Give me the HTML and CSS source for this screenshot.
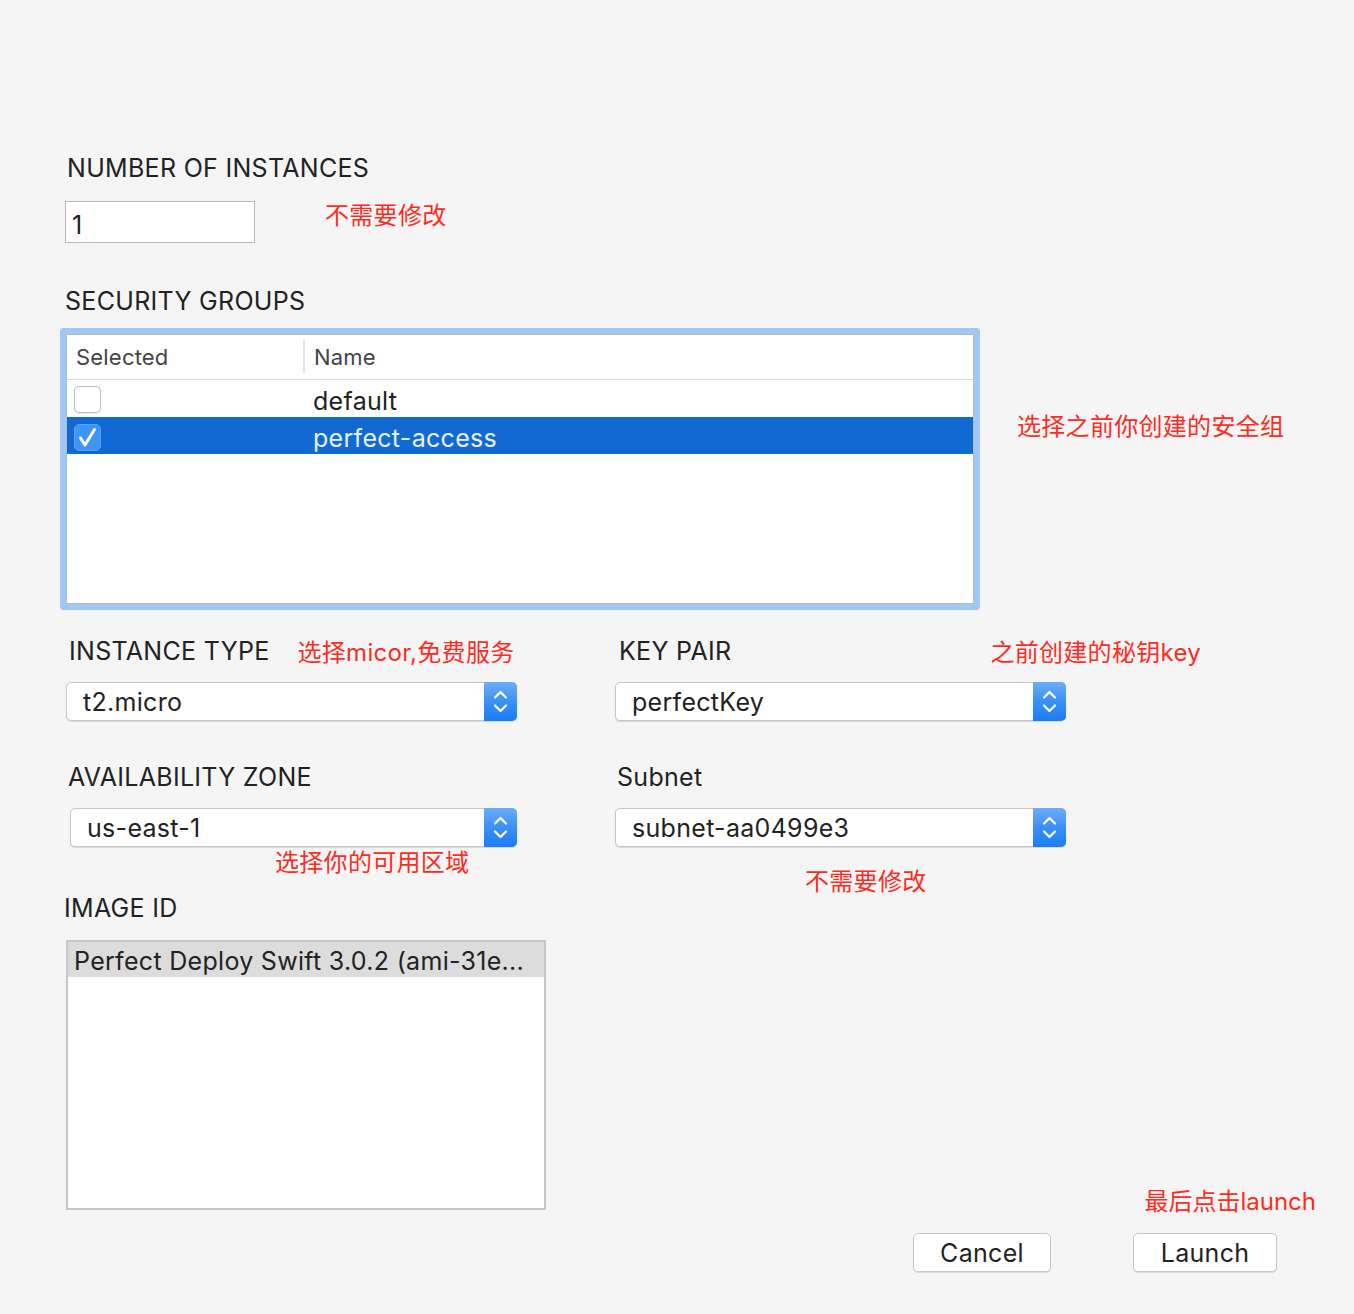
FILE: index.html
```html
<!DOCTYPE html>
<html lang="zh-CN">
<head>
<meta charset="utf-8">
<title>Launch Instance</title>
<link rel="stylesheet" href="styles.css">
</head>
<body>
<div class="page">
  <div class="form">
    <div class="label label-instances">NUMBER OF INSTANCES</div>
    <div class="row row-instances">
      <div class="textinput">1</div>
      <div class="note note-instances">不需要修改</div>
    </div>

    <div class="label label-groups">SECURITY GROUPS</div>
    <div class="row row-groups">
      <div class="table">
        <div class="thead">
          <div class="th th-sel">Selected</div>
          <div class="th th-name">Name</div>
        </div>
        <div class="tr">
          <div class="td td-sel"><span class="checkbox"></span></div>
          <div class="td td-name">default</div>
        </div>
        <div class="tr tr-selected">
          <div class="td td-sel"><span class="checkbox checkbox-on"><svg width="27" height="27" viewBox="0 0 27 27"><polyline points="6.5,14 11,21 20.5,5.5" fill="none" stroke="#fff" stroke-width="3" stroke-linecap="round" stroke-linejoin="round"/></svg></span></div>
          <div class="td td-name">perfect-access</div>
        </div>
      </div>
      <div class="note note-groups">选择之前你创建的安全组</div>
    </div>

    <div class="grid">
      <div class="cell">
        <div class="labelrow">
          <div class="label label-type">INSTANCE TYPE</div>
          <div class="note note-type">选择micor,免费服务</div>
        </div>
        <div class="select">
          <span class="select-text">t2.micro</span>
          <span class="stepper"><svg width="33" height="39" viewBox="0 0 33 39"><polyline points="11,15.5 16.5,10 22,15.5" fill="none" stroke="#fff" stroke-width="2.2" stroke-linecap="round" stroke-linejoin="round"/><polyline points="11,23.5 16.5,29 22,23.5" fill="none" stroke="#fff" stroke-width="2.2" stroke-linecap="round" stroke-linejoin="round"/></svg></span>
        </div>
      </div>
      <div class="cell">
        <div class="labelrow">
          <div class="label label-key">KEY PAIR</div>
          <div class="note note-key">之前创建的秘钥key</div>
        </div>
        <div class="select">
          <span class="select-text">perfectKey</span>
          <span class="stepper"><svg width="33" height="39" viewBox="0 0 33 39"><polyline points="11,15.5 16.5,10 22,15.5" fill="none" stroke="#fff" stroke-width="2.2" stroke-linecap="round" stroke-linejoin="round"/><polyline points="11,23.5 16.5,29 22,23.5" fill="none" stroke="#fff" stroke-width="2.2" stroke-linecap="round" stroke-linejoin="round"/></svg></span>
        </div>
      </div>
      <div class="cell cell-row2">
        <div class="labelrow">
          <div class="label label-zone">AVAILABILITY ZONE</div>
        </div>
        <div class="select select-zone">
          <span class="select-text">us-east-1</span>
          <span class="stepper"><svg width="33" height="39" viewBox="0 0 33 39"><polyline points="11,15.5 16.5,10 22,15.5" fill="none" stroke="#fff" stroke-width="2.2" stroke-linecap="round" stroke-linejoin="round"/><polyline points="11,23.5 16.5,29 22,23.5" fill="none" stroke="#fff" stroke-width="2.2" stroke-linecap="round" stroke-linejoin="round"/></svg></span>
        </div>
        <div class="note note-zone">选择你的可用区域</div>
      </div>
      <div class="cell cell-row2">
        <div class="labelrow">
          <div class="label label-subnet">Subnet</div>
        </div>
        <div class="select">
          <span class="select-text">subnet-aa0499e3</span>
          <span class="stepper"><svg width="33" height="39" viewBox="0 0 33 39"><polyline points="11,15.5 16.5,10 22,15.5" fill="none" stroke="#fff" stroke-width="2.2" stroke-linecap="round" stroke-linejoin="round"/><polyline points="11,23.5 16.5,29 22,23.5" fill="none" stroke="#fff" stroke-width="2.2" stroke-linecap="round" stroke-linejoin="round"/></svg></span>
        </div>
        <div class="note note-subnet">不需要修改</div>
      </div>
    </div>

    <div class="bottom">
      <div class="imagefield">
        <div class="label label-image">IMAGE ID</div>
        <div class="imagelist">
          <div class="imagerow">Perfect Deploy Swift 3.0.2 (ami-31e...</div>
        </div>
      </div>
      <div class="footer">
        <div class="note note-launch">最后点击launch</div>
        <div class="buttons">
          <div class="button button-cancel">Cancel</div>
          <div class="button button-launch">Launch</div>
        </div>
      </div>
    </div>
  </div>
</div>
</body>
</html>
```

FILE: styles.css
```css
html, body {
  margin: 0;
  padding: 0;
  background: #f5f5f5;
}

.page {
  width: 1354px;
  height: 1314px;
  box-sizing: border-box;
  overflow: hidden;
  background: #f5f5f5;
  font-family: Inter, "Noto Sans CJK SC", sans-serif;
  color: #222;
  letter-spacing: 0.3px;
}

.form {
  padding: 153px 0 0 65px;
}

.label {
  font-size: 25px;
  line-height: 30px;
  height: 30px;
  color: #222;
  white-space: nowrap;
}

.label-instances {
  margin-left: 2px;
}

.note {
  font-family: Inter, "Noto Sans CJK SC", sans-serif;
  font-size: 24px;
  line-height: 28px;
  height: 28px;
  color: #fd2c1f;
  white-space: nowrap;
  letter-spacing: 0.3px;
}

.row {
  display: flex;
  align-items: flex-start;
}

/* number of instances */
.row-instances {
  margin-top: 18px;
}

.textinput {
  width: 190px;
  height: 42px;
  box-sizing: border-box;
  border: 1px solid #b9b9b9;
  background: #fff;
  font-size: 25px;
  line-height: 34px;
  padding: 6px 0 0 6px;
}

.note-instances {
  margin-left: 70px;
  margin-top: 1px;
}

/* security groups */
.label-groups {
  margin-top: 43px;
}

.row-groups {
  margin-top: 18px;
}

.table {
  width: 908px;
  height: 270px;
  box-sizing: border-box;
  margin-left: 1px;
  border: 1px solid #b9b9b9;
  border-radius: 1px;
  background: #fff;
  box-shadow: 0 0 0 6px #9fc8f4;
}

.thead {
  display: grid;
  grid-template-columns: 238px 1fr;
  height: 44px;
  border-bottom: 1px solid #dcdcdc;
  align-items: center;
}

.th {
  font-size: 22px;
  line-height: 44px;
  color: #444;
  letter-spacing: 0.2px;
}

.th-sel {
  padding-left: 9px;
  position: relative;
}

.th-sel::after {
  content: "";
  position: absolute;
  right: 0;
  top: 5px;
  bottom: 6px;
  width: 2px;
  background: #e2e2e2;
}

.th-name {
  padding-left: 9px;
}

.tr {
  display: grid;
  grid-template-columns: 238px 1fr;
  height: 37px;
  align-items: center;
}

.tr-selected {
  background: #1169d4;
  color: #e9f1fb;
}

.td {
  font-size: 25px;
}

.td-name {
  padding-left: 8px;
  line-height: 34px;
  padding-top: 4px;
}

.td-sel {
  padding-left: 7px;
  height: 37px;
  display: flex;
  align-items: center;
}

.checkbox {
  display: block;
  width: 27px;
  height: 27px;
  box-sizing: border-box;
  border: 1px solid #bcbcbc;
  border-radius: 5px;
  background: #fff;
  box-shadow: 0 0.5px 1px rgba(0, 0, 0, 0.08);
}

.checkbox-on {
  border-color: #5aa5f8;
  background: #3f95f6;
  margin-top: 2px;
  position: relative;
}

.checkbox-on svg {
  display: block;
  margin: -1px;
}

.note-groups {
  margin-left: 43px;
  margin-top: 79px;
}

/* grid of selects */
.grid {
  display: grid;
  grid-template-columns: 451px 451px;
  column-gap: 98px;
  margin-top: 32px;
  margin-left: 1px;
}

.cell-row2 {
  margin-top: 41px;
}

.labelrow {
  display: flex;
  align-items: flex-start;
  height: 30px;
}

.label-type {
  margin-left: 3px;
}

.note-type {
  margin-left: 28px;
  margin-top: 3px;
}

.label-key {
  margin-left: 4px;
}

.note-key {
  margin-left: 259px;
  margin-top: 3px;
}

.label-zone {
  margin-left: 2px;
}

.label-subnet {
  margin-left: 2px;
}

.select {
  display: flex;
  align-items: stretch;
  height: 39px;
  box-sizing: border-box;
  margin-top: 16px;
  border: 1px solid #c6c6c6;
  border-radius: 5px;
  background: #fff;
  box-shadow: 0 1px 1px rgba(0, 0, 0, 0.12);
}

.select-zone {
  margin-left: 4px;
}

.select-text {
  flex: 1;
  font-size: 25px;
  line-height: 35px;
  padding-left: 16px;
  padding-top: 2px;
}

.stepper {
  width: 33px;
  margin: -1px -1px -1px 0;
  border-radius: 0 5px 5px 0;
  background: linear-gradient(to bottom, #6dadf8 0%, #3b90f7 50%, #1a7cf5 100%);
}

.stepper svg {
  display: block;
}

.note-zone {
  margin-left: 209px;
  margin-top: 2px;
}

.note-subnet {
  margin-left: 190px;
  margin-top: 21px;
  height: 24px;
}

/* bottom */
.bottom {
  display: flex;
  align-items: flex-end;
  margin-top: 1px;
}

.imagefield {
  padding-bottom: 62px;
}

.label-image {
  margin-left: -1px;
}

.imagelist {
  width: 480px;
  height: 270px;
  box-sizing: border-box;
  margin-top: 17px;
  margin-left: 1px;
  border: 2px solid #c6c6c6;
  background: #fff;
}

.imagerow {
  height: 35px;
  box-sizing: border-box;
  background: #dcdcdc;
  font-size: 25px;
  line-height: 31px;
  padding: 4px 0 0 6px;
  white-space: nowrap;
}

.footer {
  margin-left: auto;
  margin-right: 38px;
  display: flex;
  flex-direction: column;
  width: 403px;
}

.note-launch {
  align-self: flex-end;
  margin-bottom: 17px;
  letter-spacing: 0;
}

.buttons {
  display: flex;
  gap: 82px;
}

.button {
  height: 39px;
  box-sizing: border-box;
  border: 1px solid #c8c8c8;
  border-radius: 5px;
  background: #fff;
  box-shadow: 0 1px 1px rgba(0, 0, 0, 0.12);
  font-size: 25px;
  line-height: 36px;
  padding-top: 1px;
  text-align: center;
}

.button-cancel {
  width: 138px;
}

.button-launch {
  width: 144px;
}
```
